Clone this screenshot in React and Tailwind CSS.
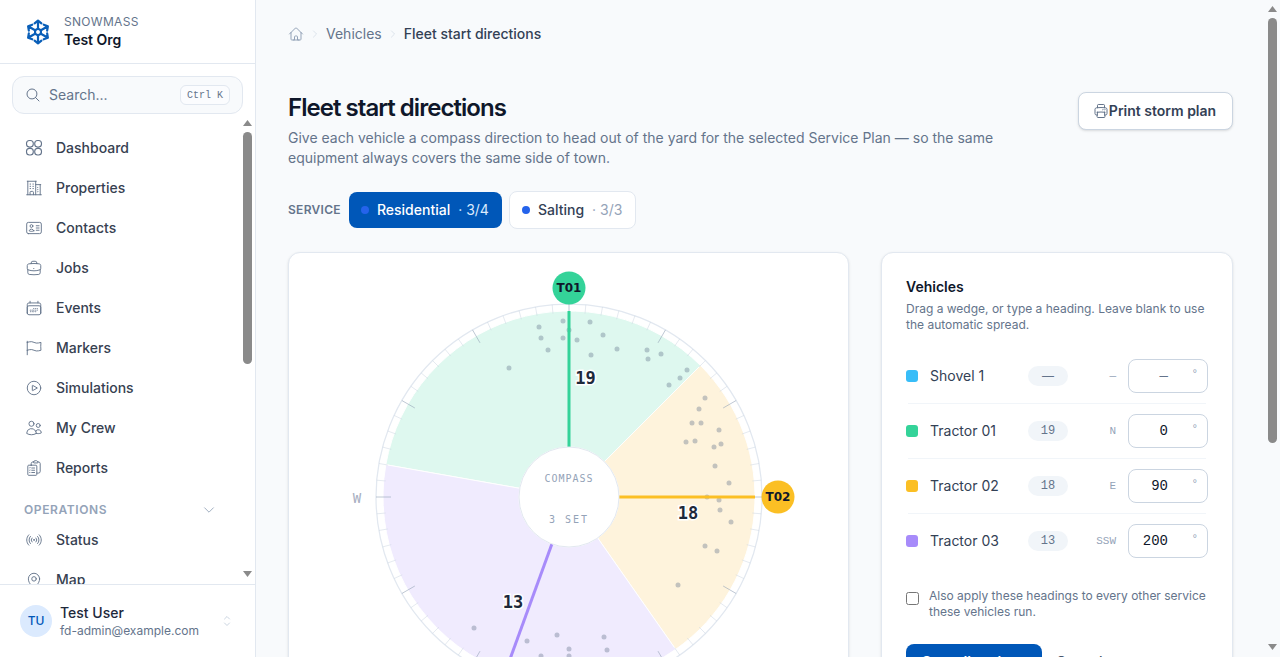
import React from 'react';
import {
  HiOutlineBuildingOffice2, HiOutlineIdentification, HiOutlineBriefcase,
  HiOutlineCalendarDays, HiOutlineFlag, HiOutlinePlayCircle, HiOutlineUsers,
  HiOutlineClipboardDocumentList, HiOutlineSignal, HiOutlineMapPin, HiOutlineHome,
  HiOutlinePrinter, HiOutlineMagnifyingGlass, HiOutlineChevronDown, HiOutlineChevronUpDown,
  HiOutlineChevronRight, HiOutlineTruck, HiOutlineCog6Tooth, HiOutlineBell, HiOutlineDocumentText,
} from 'react-icons/hi2';

const DashboardIcon = ({ className }) => (
  <svg viewBox="0 0 18 18" fill="none" stroke="currentColor" strokeWidth="1.1" className={className}>
    <rect x="1.5" y="1.5" width="6.8" height="6.6" rx="3" />
    <rect x="9.7" y="1.5" width="6.8" height="6.6" rx="3" />
    <rect x="1.5" y="9.4" width="6.8" height="6.6" rx="3" />
    <rect x="9.7" y="9.4" width="6.8" height="6.6" rx="3" />
  </svg>
);

const Logo = () => (
  <svg width="28" height="28" viewBox="-14 -14 28 28" fill="none" stroke="#0a5fb8" strokeWidth="2.2" strokeLinecap="round" strokeLinejoin="round" className="shrink-0">
    <polygon points="0,-3.4 2.9,-1.7 2.9,1.7 0,3.4 -2.9,1.7 -2.9,-1.7" />
    {[0, 60, 120, 180, 240, 300].map((a) => (
      <g key={a} transform={`rotate(${a})`}>
        <path d="M0 -3.4V-11.4M-3.4 -8.6L0 -11.4L3.4 -8.6" />
      </g>
    ))}
  </svg>
);

const MAIN_NAV = [
  ['Dashboard', DashboardIcon],
  ['Properties', HiOutlineBuildingOffice2],
  ['Contacts', HiOutlineIdentification],
  ['Jobs', HiOutlineBriefcase],
  ['Events', HiOutlineCalendarDays],
  ['Markers', HiOutlineFlag],
  ['Simulations', HiOutlinePlayCircle],
  ['My Crew', HiOutlineUsers],
  ['Reports', HiOutlineClipboardDocumentList],
];

const OPS_NAV = [
  ['Status', HiOutlineSignal],
  ['Map', HiOutlineMapPin],
  ['Vehicles', HiOutlineTruck],
  ['Alerts', HiOutlineBell],
  ['Documents', HiOutlineDocumentText],
  ['Settings', HiOutlineCog6Tooth],
];

const VEHICLES = [
  { name: 'Shovel 1', color: 'bg-[#38bdf8]', count: '—', dir: '—', heading: '—' },
  { name: 'Tractor 01', color: 'bg-[#34d399]', count: '19', dir: 'N', heading: '0' },
  { name: 'Tractor 02', color: 'bg-[#fbbf24]', count: '18', dir: 'E', heading: '90' },
  { name: 'Tractor 03', color: 'bg-[#a78bfa]', count: '13', dir: 'SSW', heading: '200' },
];

// compass is drawn around 230,230; screen centre of the dial is 569,497
const CX = 230;
const CY = 230;
const pt = (deg, r) => {
  const a = (deg * Math.PI) / 180;
  return [CX + r * Math.sin(a), CY - r * Math.cos(a)];
};
const wedge = (from, to, r0, r1) => {
  const [x1, y1] = pt(from, r1);
  const [x2, y2] = pt(to, r1);
  const [x3, y3] = pt(to, r0);
  const [x4, y4] = pt(from, r0);
  const large = (to - from + 360) % 360 > 180 ? 1 : 0;
  return `M${x1} ${y1}A${r1} ${r1} 0 ${large} 1 ${x2} ${y2}L${x3} ${y3}A${r0} ${r0} 0 ${large} 0 ${x4} ${y4}Z`;
};

const DOTS = [
  [539, 327], [563, 321], [541, 338], [563, 338], [577, 340], [548, 350], [509, 368], [590, 322], [603, 335],
  [591, 355], [617, 349], [647, 350], [648, 359], [661, 354], [687, 370], [680, 378], [669, 385], [569, 330],
  [705, 398], [699, 409], [692, 423], [701, 423], [719, 430], [686, 442], [695, 441], [714, 447], [721, 444],
  [715, 466], [729, 483], [707, 497], [719, 500], [720, 510], [731, 522], [705, 546], [717, 551], [678, 585],
  [474, 628], [527, 641], [557, 635], [541, 656], [569, 649], [569, 656], [604, 637], [607, 650],
];

const HANDLES = [
  { deg: 0, color: '#34d399', label: 'T01' },
  { deg: 90, color: '#fbbf24', label: 'T02' },
  { deg: 200, color: '#a78bfa', label: 'T03' },
];

const MONO = { fontFamily: '"DejaVu Sans Mono", monospace' };
const SANS = { fontFamily: '"DejaVu Sans", sans-serif' };
const LIB_MONO = { fontFamily: '"Liberation Mono", monospace' };

const Compass = () => {
  const ticks = [];
  for (let d = 0; d < 360; d += 5) {
    const major = d % 30 === 0;
    const [x1, y1] = pt(d, 193);
    const [x2, y2] = pt(d, major ? 178 : 184);
    ticks.push(
      <line key={d} x1={x1} y1={y1} x2={x2} y2={y2} stroke={major ? '#94a3b8' : '#cbd5e1'} strokeOpacity={major ? 0.6 : 0.5} strokeWidth="1" />
    );
  }
  return (
    <svg width="460" height="460" viewBox="0 0 460 460" className="block overflow-visible">
      <circle cx={CX} cy={CY} r="193" fill="#ffffff" stroke="#e2e8f0" strokeWidth="1.25" />
      <path d={wedge(280, 45, 50, 186)} fill="#def8ef" stroke="#ffffff" strokeWidth="1" />
      <path d={wedge(45, 145, 50, 186)} fill="#fef3dc" stroke="#ffffff" strokeWidth="1" />
      <path d={wedge(145, 280, 50, 186)} fill="#f0ebfe" stroke="#ffffff" strokeWidth="1" />
      {ticks}
      {DOTS.map(([x, y], i) => (
        <circle key={i} cx={x - 339} cy={y - 267} r="2.5" fill="#64748b" fillOpacity="0.38" />
      ))}
      {HANDLES.map((h) => {
        const [x1, y1] = pt(h.deg, 50);
        const [x2, y2] = pt(h.deg, 186);
        const [hx, hy] = pt(h.deg, 209);
        return (
          <g key={h.label}>
            <line x1={x1} y1={y1} x2={x2} y2={y2} stroke={h.color} strokeWidth="3" />
            <circle cx={hx} cy={hy} r="16.5" fill={h.color} />
            <text x={hx} y={hy + 4} textAnchor="middle" fontSize="12" fontWeight="700" fill="#0f172a" style={SANS}>{h.label}</text>
          </g>
        );
      })}
      <circle cx={CX} cy={CY} r="50" fill="#ffffff" stroke="#e2e8f0" strokeWidth="1" />
      <text x={CX} y={CY - 15} textAnchor="middle" fontSize="10" letterSpacing="1" fill="#94a3b8" style={MONO}>COMPASS</text>
      <text x={CX} y={CY + 26} textAnchor="middle" fontSize="10" letterSpacing="2" fill="#94a3b8" style={MONO}>3 SET</text>
      <text x="18" y={CY + 6} textAnchor="middle" fontSize="14" fill="#a8afc2" style={MONO}>W</text>
      <text x={CX} y={CY + 236} textAnchor="middle" fontSize="14" fill="#a8afc2" style={MONO}>S</text>
      {[['19', 246.5, 117], ['18', 349, 252], ['13', 174, 341]].map(([t, x, y]) => (
        <text key={t} x={x} y={y} textAnchor="middle" fontSize="17" fontWeight="700" fill="#1e293b" stroke="#ffffff" strokeWidth="3" paintOrder="stroke" style={MONO}>{t}</text>
      ))}
    </svg>
  );
};

// the browser hides native scrollbars in the photo, so these are painted over the scrollers
const ScrollArrow = ({ down, className }) => (
  <svg width="9" height="6" viewBox="0 0 9 6" fill="#8a8a8a" className={`absolute ${className}`}>
    <polygon points={down ? '0,0 9,0 4.5,6' : '0,6 9,6 4.5,0'} />
  </svg>
);

const NavItem = ({ label, icon: Icon }) => (
  <a className="flex h-10 items-center gap-[13px] pl-[25px] text-sm font-medium text-[#374151]">
    <Icon className="h-[18px] w-[18px] shrink-0 text-[#64748b]" strokeWidth={1.25} />
    {label}
  </a>
);

const Sidebar = () => (
  <aside className="flex h-full w-64 shrink-0 flex-col border-r border-[#e2e8f0] bg-white">
    <div className="flex h-16 shrink-0 items-center gap-[12px] border-b border-[#e2e8f0] pl-6">
      <Logo />
      <div>
        <div className="text-xs leading-4 tracking-wide text-[#64748b]">SNOWMASS</div>
        <div className="text-sm leading-5 font-semibold text-[#0f172a]">Test Org</div>
      </div>
    </div>
    <div className="shrink-0 px-3 pt-3">
      <div className="flex h-[38px] items-center rounded-xl border border-[#e2e8f0] bg-[#f8fafc] pr-3 pl-3">
        <HiOutlineMagnifyingGlass className="h-4 w-4 text-[#64748b]" />
        <span className="ml-2 flex-1 text-sm text-[#64748b]">Search...</span>
        <kbd className="flex h-[20px] items-center rounded-md border border-[#e2e8f0] bg-[#fbfcfe] px-[6px] text-[10px] text-[#64748b]" style={LIB_MONO}>Ctrl K</kbd>
      </div>
    </div>
    <div className="relative min-h-0 flex-1">
      <nav className="h-full overflow-y-auto pt-[14px] pb-6">
        {MAIN_NAV.map(([label, icon]) => <NavItem key={label} label={label} icon={icon} />)}
        <div className="mt-[10px] flex h-[24px] items-center justify-between pr-[39px] pl-6">
          <span className="text-xs font-semibold tracking-wider text-[#94a3b8]">OPERATIONS</span>
          <HiOutlineChevronDown className="h-[14px] w-[14px] text-[#94a3b8]" />
        </div>
        <div className="-mt-[2px]">
          {OPS_NAV.map(([label, icon]) => <NavItem key={label} label={label} icon={icon} />)}
        </div>
      </nav>
      <ScrollArrow className="top-[6px] right-[3px]" />
      <div className="absolute top-[18px] right-[3px] h-[232px] w-[9px] rounded-full bg-[#8a8a8a]" />
      <ScrollArrow down className="right-[3px] bottom-[7px]" />
    </div>
    <div className="flex h-[73px] shrink-0 items-center border-t border-[#e2e8f0] pr-5 pl-5">
      <div className="flex h-8 w-8 shrink-0 items-center justify-center rounded-full bg-[#dbeafe] text-xs font-medium text-[#0057b8]">TU</div>
      <div className="mt-[2px] ml-2 flex-1">
        <div className="text-sm leading-[18px] font-medium text-[#1e293b]">Test User</div>
        <div className="text-xs leading-[18px] text-[#64748b]">fd-admin@example.com</div>
      </div>
      <HiOutlineChevronUpDown className="h-[16px] w-[16px] text-[#cbd5e1]" />
    </div>
  </aside>
);

const VehicleRow = ({ v, last }) => (
  <div className={`mx-[2px] flex h-[55px] items-center border-b ${last ? 'border-transparent' : 'border-[#f1f5f9]'}`}>
    <span className={`-ml-[2px] h-3 w-3 shrink-0 rounded-[3px] ${v.color}`} />
    <span className="ml-3 w-[98px] text-sm text-[#334155]">{v.name}</span>
    <span className="flex h-5 w-10 items-center justify-center rounded-full bg-[#f1f5f9] text-xs text-[#64748b]" style={v.count === '—' ? undefined : LIB_MONO}>{v.count}</span>
    <span className="w-[48px] text-right text-[11px] text-[#94a3b8]" style={LIB_MONO}>{v.dir}</span>
    <div className="relative -mr-[2px] ml-[12px] flex h-[34px] w-20 items-center justify-end rounded-lg border border-[#cbd5e1] bg-white pr-[39px] text-sm text-[#0f172a]" style={LIB_MONO}>
      <span className={v.heading === '—' ? 'text-[#64748b]' : ''}>{v.heading}</span>
      <span className="absolute top-[7px] right-[9px] text-[11px] text-[#94a3b8]">°</span>
    </div>
  </div>
);

export default function App() {
  return (
    <div className="flex h-screen overflow-hidden bg-[#f8fafc] text-[#0f172a]" style={{ fontFamily: 'Inter, "Noto Sans", sans-serif' }}>
      <Sidebar />
      <div className="relative h-full min-w-0 flex-1">
        <main className="h-full overflow-y-auto bg-[#f8fafc] pt-6 pr-[47px] pb-8 pl-8">
          <div className="flex h-5 items-center text-sm">
            <HiOutlineHome className="h-4 w-4 text-[#94a3b8]" />
            <HiOutlineChevronRight className="mx-[6px] h-[10px] w-[10px] text-[#cbd5e1]" />
            <span className="text-[#64748b]">Vehicles</span>
            <HiOutlineChevronRight className="mx-[6px] h-[10px] w-[10px] text-[#cbd5e1]" />
            <span className="font-medium text-[#334155]">Fleet start directions</span>
          </div>

          <div className="mt-[48px] flex items-start justify-between">
            <div className="max-w-[720px]">
              <h1 className="text-2xl leading-8 font-semibold tracking-[-0.96px] text-[#0f172a]">Fleet start directions</h1>
              <p className="mt-1 text-sm leading-5 text-[#64748b]">Give each vehicle a compass direction to head out of the yard for the selected Service Plan — so the same equipment always covers the same side of town.</p>
            </div>
            <button className="flex h-[38px] w-[155px] items-center justify-center rounded-lg border border-[#cbd5e1] bg-white pr-[2px] text-sm font-semibold text-[#334155] shadow-sm">
              <HiOutlinePrinter className="h-4 w-4 text-[#64748b]" />
              Print storm plan
            </button>
          </div>

          <div className="mt-[23px] flex items-center">
            <span className="mr-2 text-xs font-semibold tracking-wide text-[#64748b]">SERVICE</span>
            <button className="flex h-9 w-[153px] items-center rounded-lg bg-[#0057b8] pl-3 text-sm font-medium text-white">
              <span className="h-2 w-2 rounded-full bg-[#2563eb]" />
              <span className="ml-2">Residential</span>
              <span className="ml-2 font-normal text-[#dbeafe]">· 3/4</span>
            </button>
            <button className="ml-[7px] flex h-[38px] w-[127px] items-center rounded-lg border border-[#e2e8f0] bg-white pl-3 text-sm font-medium text-[#334155]">
              <span className="h-2 w-2 rounded-full bg-[#2563eb]" />
              <span className="ml-2">Salting</span>
              <span className="ml-2 font-normal text-[#94a3b8]">· 3/3</span>
            </button>
          </div>

          <div className="mt-[23px] grid grid-cols-[561px_352px] gap-8">
            <section className="flex h-[685px] justify-center rounded-xl border border-[#e2e8f0] bg-white pt-[14px] shadow-sm">
              <Compass />
            </section>
            <section className="self-start rounded-xl border border-[#e2e8f0] bg-white p-6 shadow-sm">
              <h2 className="text-sm leading-5 font-semibold text-[#0f172a]">Vehicles</h2>
              <p className="mt-1 text-xs leading-4 text-[#64748b]">Drag a wedge, or type a heading. Leave blank to use the automatic spread.</p>
              <div className="mt-4">
                {VEHICLES.map((v, i) => <VehicleRow key={v.name} v={v} last={i === VEHICLES.length - 1} />)}
              </div>
              <label className="mt-[19px] flex items-start gap-[10px] text-xs leading-4 text-[#64748b]">
                <input type="checkbox" className="mt-[4px] h-[13px] w-[13px] shrink-0" />
                Also apply these headings to every other service these vehicles run.
              </label>
              <div className="mt-6 flex items-center gap-[14px]">
                <button className="h-9 w-[136px] rounded-lg bg-[#0057b8] text-sm font-semibold text-white">Save directions</button>
                <button className="text-sm font-medium text-[#475569]">Cancel</button>
              </div>
            </section>
          </div>
        </main>
        <ScrollArrow className="top-[6px] right-[3px]" />
        <div className="absolute top-[18px] right-[3px] h-[425px] w-[9px] rounded-full bg-[#8a8a8a]" />
        <ScrollArrow down className="right-[3px] bottom-[7px]" />
      </div>
    </div>
  );
}
